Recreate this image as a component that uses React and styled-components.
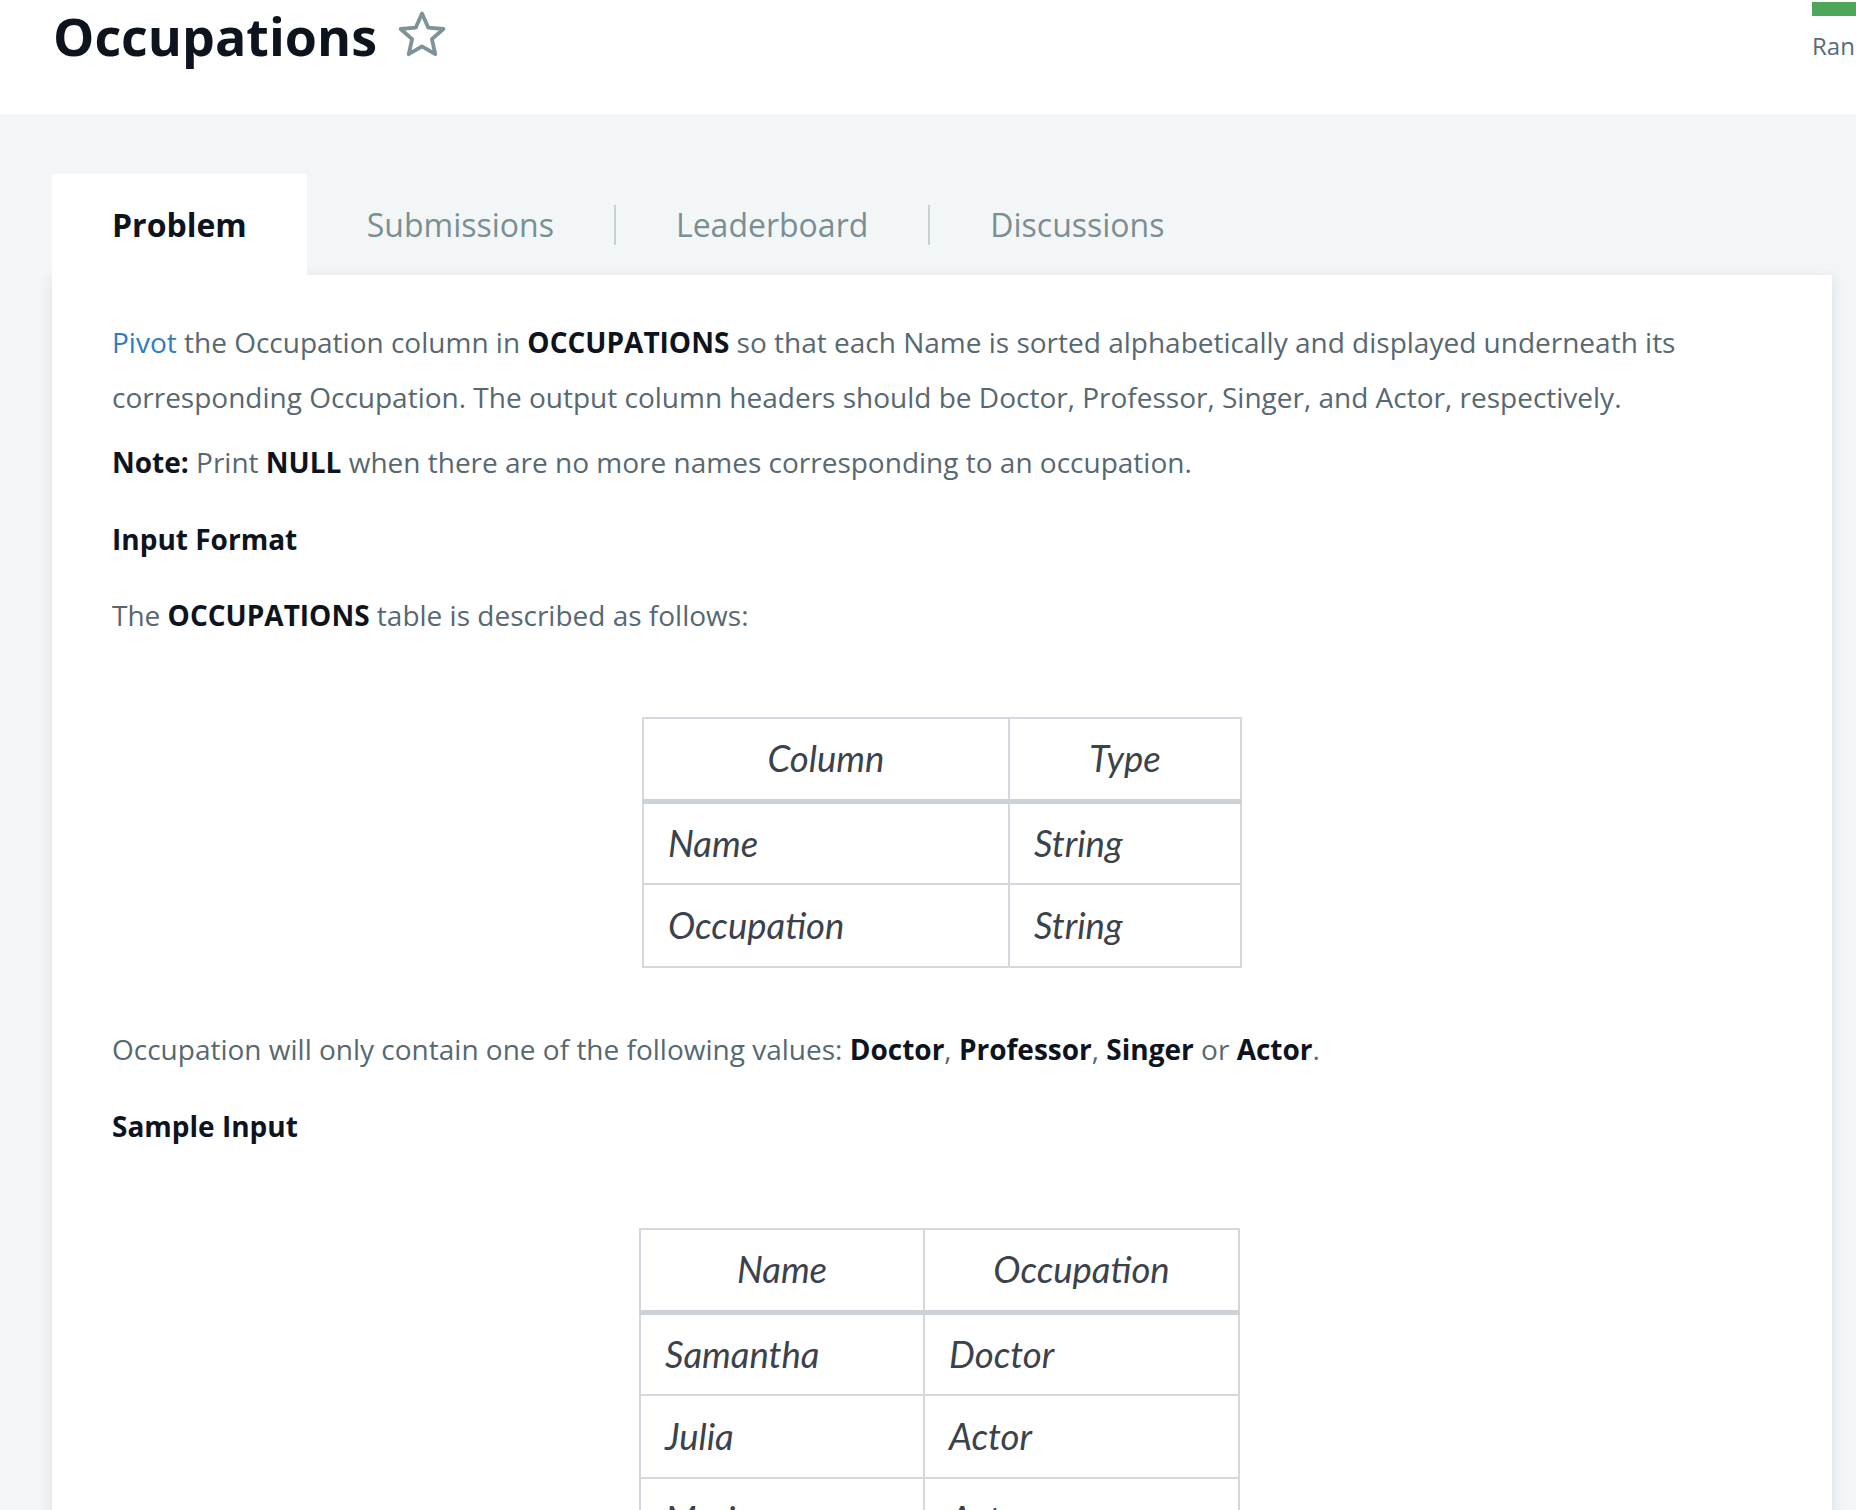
import React from "react";
import styled, { createGlobalStyle } from "styled-components";

const Global = createGlobalStyle`
  html, body { margin: 0; padding: 0; overflow: hidden; background: #f3f6f7; }
  body { font-family: "Open Sans", "Noto Sans", sans-serif; color: #576871; }
  * { box-sizing: border-box; }
`;

const Page = styled.div`
  width: 1856px;
  min-height: 1510px;
  background: #f3f6f7;
`;

const Header = styled.header`
  height: 114px;
  background: #ffffff;
  display: flex;
  align-items: flex-start;
  padding-left: 53px;
`;

const TitleRow = styled.div`
  display: flex;
  align-items: center;
  gap: 18px;
  height: 72px;
`;

const Title = styled.h1`
  margin: 0;
  font-size: 52px;
  line-height: 72px;
  font-weight: 700;
  color: #0e141e;
`;

const RankBox = styled.div`
  margin-left: auto;
  width: 44px;
  overflow: hidden;
  white-space: nowrap;
  padding-top: 2px;
`;

const GreenBar = styled.div`
  height: 14px;
  width: 120px;
  background: #4fa55a;
`;

const RankText = styled.div`
  margin-top: 15px;
  font-size: 24px;
  line-height: 30px;
  color: #5a6b75;
`;

const Main = styled.main`
  padding: 60px 24px 0 52px;
`;

const Tabs = styled.nav`
  display: flex;
  align-items: center;
  height: 101px;
`;

const Tab = styled.div`
  height: 101px;
  display: flex;
  align-items: center;
  padding: 0 60px;
  font-size: 32px;
  background: ${(p) => (p.$active ? "#ffffff" : "transparent")};
  color: ${(p) => (p.$active ? "#0e141e" : "#7a8f94")};
  font-weight: ${(p) => (p.$active ? 700 : 400)};
`;

const Sep = styled.div`
  width: 2px;
  height: 40px;
  background: #c7d1d4;
`;

const Card = styled.section`
  background: #ffffff;
  box-shadow: 0 3px 14px rgba(20, 40, 60, 0.1);
  padding: 40px 60px 200px;
  font-size: 28px;
  line-height: 55px;
`;

const P = styled.p`
  margin: 0 0 10px;
  color: #576871;
`;

const B = styled.strong`
  font-weight: 700;
  color: #0e141e;
`;

const Link = styled.a`
  color: #2e7cc2;
  text-decoration: none;
`;

const Heading = styled.h3`
  margin: ${(p) => p.$top}px 0 21px;
  font-size: 28px;
  line-height: 55px;
  font-weight: 700;
  color: #0e141e;
`;

const TableWrap = styled.div`
  display: flex;
  justify-content: center;
  margin: ${(p) => p.$top}px 0 ${(p) => p.$bottom}px ${(p) => p.$shift || 0}px;
`;

const Table = styled.table`
  border-collapse: collapse;
  font-family: Lato, "Open Sans", sans-serif;
  font-style: italic;
  font-size: 36.5px;
  color: #3b424c;
`;

const Th = styled.th`
  font-weight: 400;
  text-align: center;
  height: 83px;
  border: 2px solid #d4d7dd;
  border-bottom: 5px solid #cdd1d8;
  padding: 0;
`;

const Td = styled.td`
  height: 83px;
  border: 2px solid #d4d7dd;
  padding: 0 0 0 24px;
`;

const Star = () => (
  <svg width="54" height="54" viewBox="0 0 48 48" fill="none">
    <polygon
      points="24,4 29.6,16.6 43,17.8 32.8,26.8 35.8,40.2 24,33.2 12.2,40.2 15.2,26.8 5,17.8 18.4,16.6"
      stroke="#7d9397"
      strokeWidth="3.4"
      strokeLinejoin="round"
    />
  </svg>
);

const sample = [
  ["Samantha", "Doctor"],
  ["Julia", "Actor"],
  ["Maria", "Actor"],
  ["Meera", "Singer"],
  ["Ashely", "Professor"],
];

export default function App() {
  return (
    <Page>
      <Global />
      <Header>
        <TitleRow>
          <Title>Occupations</Title>
          <Star />
        </TitleRow>
        <RankBox>
          <GreenBar />
          <RankText>Rank: 1</RankText>
        </RankBox>
      </Header>
      <Main>
        <Tabs>
          <Tab $active>Problem</Tab>
          <Tab>Submissions</Tab>
          <Sep />
          <Tab>Leaderboard</Tab>
          <Sep />
          <Tab>Discussions</Tab>
        </Tabs>
        <Card>
          <P>
            <Link href="#">Pivot</Link> the Occupation column in <B>OCCUPATIONS</B> so that each Name is sorted
            alphabetically and displayed underneath its corresponding Occupation. The output column headers should
            be Doctor, Professor, Singer, and Actor, respectively.
          </P>
          <P>
            <B>Note:</B> Print <B>NULL</B> when there are no more names corresponding to an occupation.
          </P>
          <Heading $top={22}>Input Format</Heading>
          <P>
            The <B>OCCUPATIONS</B> table is described as follows:
          </P>
          <TableWrap $top={74} $bottom={54}>
            <Table>
              <colgroup>
                <col style={{ width: 366 }} />
                <col style={{ width: 232 }} />
              </colgroup>
              <thead>
                <tr>
                  <Th>Column</Th>
                  <Th>Type</Th>
                </tr>
              </thead>
              <tbody>
                <tr>
                  <Td>Name</Td>
                  <Td>String</Td>
                </tr>
                <tr>
                  <Td>Occupation</Td>
                  <Td>String</Td>
                </tr>
              </tbody>
            </Table>
          </TableWrap>
          <P>
            Occupation will only contain one of the following values: <B>Doctor</B>, <B>Professor</B>,{" "}
            <B>Singer</B> or <B>Actor</B>.
          </P>
          <Heading $top={22}>Sample Input</Heading>
          <TableWrap $top={74} $bottom={55} $shift={-5}>
            <Table>
              <colgroup>
                <col style={{ width: 284 }} />
                <col style={{ width: 315 }} />
              </colgroup>
              <thead>
                <tr>
                  <Th>Name</Th>
                  <Th>Occupation</Th>
                </tr>
              </thead>
              <tbody>
                {sample.map(([n, o]) => (
                  <tr key={n}>
                    <Td>{n}</Td>
                    <Td>{o}</Td>
                  </tr>
                ))}
              </tbody>
            </Table>
          </TableWrap>
        </Card>
      </Main>
    </Page>
  );
}
